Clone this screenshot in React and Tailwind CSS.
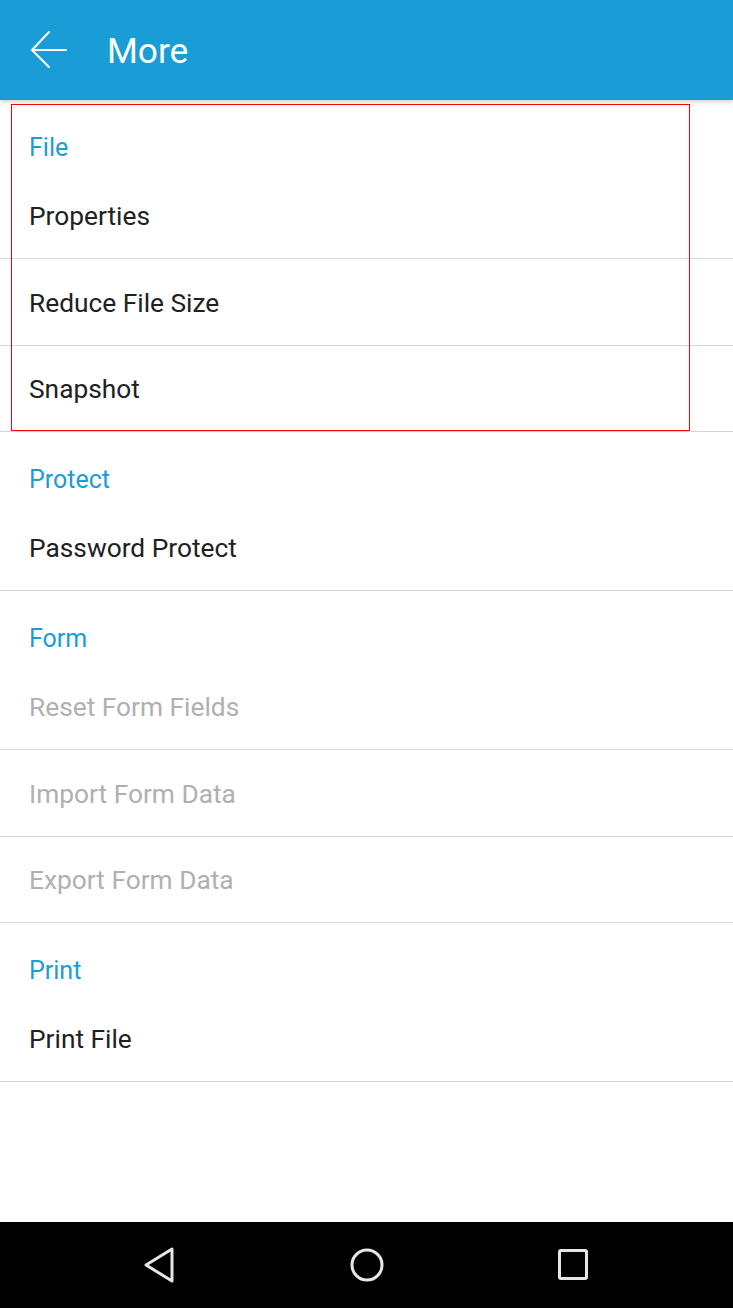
import React from "react";

const F = { fontFamily: "Roboto, 'Noto Sans', sans-serif" };

function SectionHeader({ title }) {
  return (
    <div className="h-[72.5px] flex items-end pb-[13px] pl-[29px]">
      <span className="text-[25px] leading-[24px] text-[#1a9cd7]">{title}</span>
    </div>
  );
}

function Item({ label, disabled }) {
  return (
    <div className="h-[86.5px] box-border border-b border-[#d6d6d6] flex items-center pl-[29px] pt-[2px]">
      <span className={"text-[26.3px] leading-[28px] " + (disabled ? "text-[#b0b0b0]" : "text-[#212121]")}>{label}</span>
    </div>
  );
}

export default function App() {
  return (
    <div style={F} className="w-[733px] h-[1308px] bg-white flex flex-col relative overflow-hidden">
      <div className="h-[100px] bg-[#1a9cd7] flex items-center shrink-0 shadow-[0_2px_4px_rgba(0,0,0,0.18)] z-10">
        <svg width="40" height="40" viewBox="0 0 40 40" className="ml-[30px]" fill="none" stroke="white" strokeWidth="2" strokeLinecap="round" strokeLinejoin="round">
          <path d="M2 20H36" />
          <path d="M19 2L2 20L19 37" />
        </svg>
        <span className="ml-[37px] pt-[4px] text-[35.3px] text-white leading-none">More</span>
      </div>
      <div className="flex-1 flex flex-col">
        <SectionHeader title="File" />
        <Item label="Properties" />
        <Item label="Reduce File Size" />
        <Item label="Snapshot" />
        <SectionHeader title="Protect" />
        <Item label="Password Protect" />
        <SectionHeader title="Form" />
        <Item label="Reset Form Fields" disabled />
        <Item label="Import Form Data" disabled />
        <Item label="Export Form Data" disabled />
        <SectionHeader title="Print" />
        <Item label="Print File" />
      </div>
      <div className="h-[86px] bg-black shrink-0 flex items-center justify-center gap-[146px]">
        <div className="w-[60px] flex justify-center">
          <svg width="34" height="36" viewBox="0 0 34 36" fill="none" stroke="#e6e6e6" strokeWidth="3" strokeLinejoin="round" className="-ml-[3px]">
            <path d="M30 2L30 34L4 18Z" />
          </svg>
        </div>
        <div className="w-[60px] flex justify-center">
          <svg width="36" height="36" viewBox="0 0 36 36" fill="none" stroke="#e6e6e6" strokeWidth="3">
            <circle cx="18" cy="18" r="15" />
          </svg>
        </div>
        <div className="w-[60px] flex justify-center">
          <svg width="32" height="34" viewBox="0 0 32 34" fill="none" stroke="#e6e6e6" strokeWidth="3">
            <rect x="2.5" y="2.5" width="27" height="28" rx="1.5" />
          </svg>
        </div>
      </div>
      <div className="absolute left-[11px] top-[104px] w-[679px] h-[327px] border border-[#ff0000] pointer-events-none z-20" />
    </div>
  );
}
